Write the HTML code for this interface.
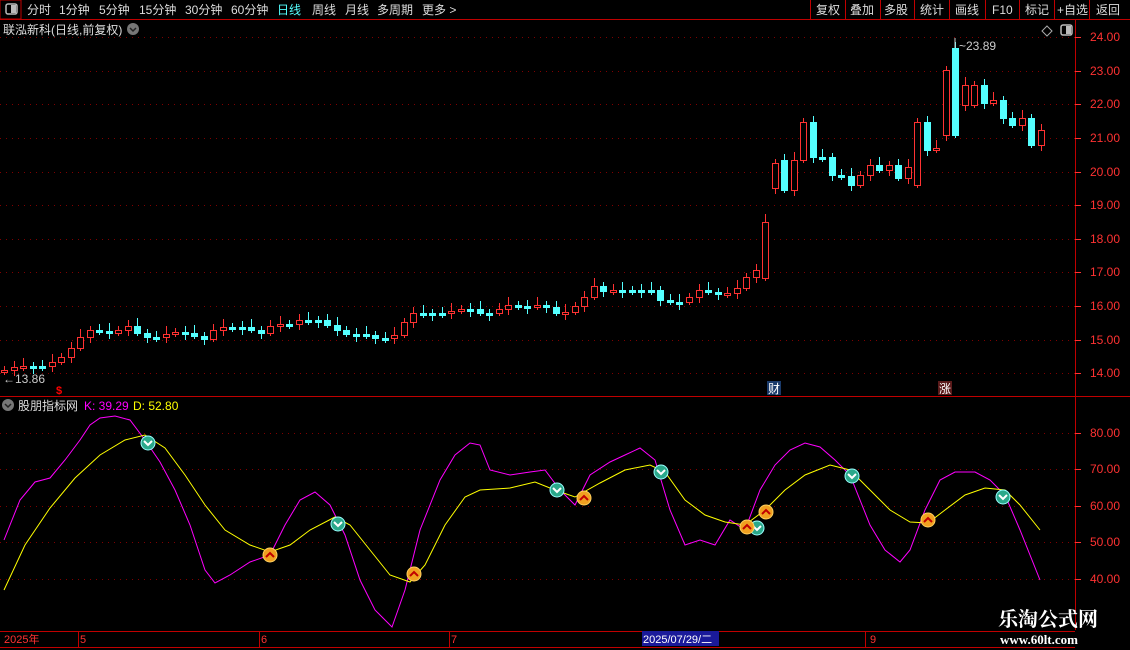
<!DOCTYPE html>
<html><head><meta charset="utf-8"><style>
body{margin:0;background:#000;width:1130px;height:650px;overflow:hidden;font-family:"Liberation Sans","Noto Sans CJK SC",sans-serif;}
svg{position:absolute;left:0;top:0}
</style></head><body>
<svg id="s" width="1130" height="650" xmlns="http://www.w3.org/2000/svg" font-family="Liberation Sans, Noto Sans CJK SC, sans-serif">
<rect width="1130" height="650" fill="#000"/>
<line x1="0" y1="19.5" x2="1130" y2="19.5" stroke="#c00000"/>
<rect x="0" y="0" width="21" height="19" fill="none" stroke="#c00000"/>
<rect x="6" y="4" width="11" height="10" rx="2" fill="none" stroke="#bbb" stroke-width="1.5"/><rect x="11" y="5" width="5" height="8" fill="#bbb"/>
<g font-size="12" fill="#ddd">
<text x="27" y="14">分时</text><text x="59" y="14">1分钟</text><text x="99" y="14">5分钟</text><text x="139" y="14">15分钟</text><text x="185" y="14">30分钟</text><text x="231" y="14">60分钟</text><text x="277" y="14" fill="#54ffff">日线</text><text x="312" y="14">周线</text><text x="345" y="14">月线</text><text x="377" y="14">多周期</text><text x="422" y="14">更多 &gt;</text>
<text x="816" y="14">复权</text><text x="850" y="14">叠加</text><text x="884" y="14">多股</text><text x="920" y="14">统计</text><text x="955" y="14">画线</text><text x="992" y="14">F10</text><text x="1025" y="14">标记</text><text x="1057" y="14">+自选</text><text x="1096" y="14">返回</text>
</g>
<g stroke="#c00000"><line x1="810.5" y1="0" x2="810.5" y2="19"/><line x1="845.5" y1="0" x2="845.5" y2="19"/><line x1="880.5" y1="0" x2="880.5" y2="19"/><line x1="914.5" y1="0" x2="914.5" y2="19"/><line x1="949.5" y1="0" x2="949.5" y2="19"/><line x1="985.5" y1="0" x2="985.5" y2="19"/><line x1="1019.5" y1="0" x2="1019.5" y2="19"/><line x1="1054.5" y1="0" x2="1054.5" y2="19"/><line x1="1089.5" y1="0" x2="1089.5" y2="19"/></g>
<text x="3" y="34" font-size="12" fill="#ddd">联泓新科(日线,前复权)</text>
<circle cx="133" cy="29" r="6" fill="#777"/><path d="M130 28l3 3 3-3" stroke="#222" fill="none" stroke-width="1.5"/>
<path d="M1047 26l5 5-5 5-5-5z" fill="none" stroke="#aaa"/>
<rect x="1061" y="25" width="11" height="10" rx="2" fill="none" stroke="#bbb" stroke-width="1.5"/><rect x="1066" y="26" width="5" height="8" fill="#bbb"/>
<line x1="1075.5" y1="20" x2="1075.5" y2="630" stroke="#c00000"/>
<line x1="0" y1="396.5" x2="1130" y2="396.5" stroke="#c00000"/>
<line x1="0" y1="631.5" x2="1075" y2="631.5" stroke="#c00000"/>
<line x1="0" y1="647.5" x2="1075" y2="647.5" stroke="#c00000"/>
<g id="grid"></g>
<g id="candles"></g>
<text x="959" y="50" font-size="12" fill="#ccc">~23.89</text>
<line x1="955" y1="38" x2="955" y2="48" stroke="#ccc"/>
<text x="3" y="383" font-size="12" fill="#ccc">←13.86</text>
<text x="56" y="394" font-size="11" fill="#f00" font-weight="bold">$</text>
<rect x="767" y="381" width="14" height="14" fill="#1a3a6a"/><text x="768" y="393" font-size="12" fill="#fff">财</text>
<rect x="938" y="381" width="14" height="14" fill="#5a1a1a"/><text x="939" y="393" font-size="12" fill="#fff">涨</text>
<circle cx="8" cy="405" r="6" fill="#777"/><path d="M5 404l3 3 3-3" stroke="#222" fill="none" stroke-width="1.5"/>
<text x="18" y="410" font-size="12" fill="#ddd">股朋指标网</text>
<text x="84" y="410" font-size="12" fill="#f0f">K: 39.29</text>
<text x="133" y="410" font-size="12" fill="#ff0">D: 52.80</text>
<polyline fill="none" stroke="#f0f" stroke-width="1" points="4,540 20,500 35,482 50,478 65,460 80,440 90,425 100,418 115,416 130,420 145,440 160,462 175,490 190,525 205,570 215,583 230,575 250,562 270,555 285,525 300,500 315,492 330,505 345,535 360,580 375,610 392,627 405,590 420,530 440,480 455,455 470,443 480,445 490,470 510,475 530,472 545,470 560,490 575,505 590,475 610,462 625,455 640,448 655,460 670,510 685,545 700,540 715,545 730,520 745,530 760,490 775,465 790,450 805,443 820,447 835,460 850,475 870,525 885,550 900,562 910,550 925,510 940,480 955,472 975,472 990,480 1005,495 1020,530 1040,580"/>
<polyline fill="none" stroke="#ff0" stroke-width="1" points="4,590 25,545 50,508 75,478 100,455 125,440 145,435 165,448 185,475 205,505 225,530 250,545 270,552 290,545 310,530 335,517 350,525 370,550 390,575 410,582 425,565 445,525 465,497 480,490 510,488 535,482 555,490 575,497 600,483 625,470 650,465 665,472 685,500 705,515 725,522 745,525 765,510 785,490 805,475 830,465 850,470 870,490 890,510 910,522 928,523 945,510 965,495 985,488 1005,490 1020,505 1040,530"/>
<g id="icons"></g>
<g font-size="12" fill="#ff3232" id="rl"></g>
<g font-size="11" fill="#ff3232">
<text x="4" y="643">2025年</text><text x="80" y="643">5</text><text x="261" y="643">6</text><text x="451" y="643">7</text><text x="870" y="643">9</text>
</g>
<g stroke="#c00000"><line x1="78.5" y1="632" x2="78.5" y2="647"/><line x1="259.5" y1="632" x2="259.5" y2="647"/><line x1="449.5" y1="632" x2="449.5" y2="647"/><line x1="865.5" y1="632" x2="865.5" y2="647"/></g>
<rect x="642" y="631" width="77" height="15" fill="#1a1a9a"/>
<text x="643" y="643" font-size="11" fill="#fff">2025/07/29/二</text>
<text x="998" y="626" font-size="20" font-weight="bold" fill="#fff" font-family="Noto Serif CJK SC, serif">乐淘公式网</text>
<text x="1000" y="644" font-size="13" font-weight="bold" fill="#fff" font-family="Liberation Serif, serif">www.60lt.com</text>
</svg>
<script>
var NS="http://www.w3.org/2000/svg";
function el(p,t,a){var e=document.createElementNS(NS,t);for(var k in a)e.setAttribute(k,a[k]);document.getElementById(p).appendChild(e);return e;}
[37,71,104,138,172,205,239,272,306,340,373].forEach(function(y){el("grid","line",{x1:0,x2:1075,y1:y+.5,y2:y+.5,stroke:"#800000","stroke-dasharray":"1 5"});});
[433,469,506,542,579].forEach(function(y){el("grid","line",{x1:0,x2:1075,y1:y+.5,y2:y+.5,stroke:"#800000","stroke-dasharray":"1 5"});});
var pl=["24.00","23.00","22.00","21.00","20.00","19.00","18.00","17.00","16.00","15.00","14.00"];
[37,71,104,138,172,205,239,272,306,340,373].forEach(function(y,i){el("rl","line",{x1:1075,x2:1081,y1:y+.5,y2:y+.5,stroke:"#ff3232"});var t=el("rl","text",{x:1090,y:y+4});t.textContent=pl[i];});
["80.00","70.00","60.00","50.00","40.00"].forEach(function(s,i){var y=[433,469,506,542,579][i];el("rl","line",{x1:1075,x2:1081,y1:y+.5,y2:y+.5,stroke:"#ff3232"});var t=el("rl","text",{x:1090,y:y+4});t.textContent=s;});
var ys=[370,367,366,366,366,362,357,348,337,330,331,333,330,326,333,337,337,334,332,333,336,339,330,327,327,327,330,333,326,324,324,320,320,320,325,330,334,334,335,338,338,335,322,313,313,313,313,311,309,309,313,313,309,305,306,306,305,307,313,312,306,297,286,291,290,290,290,290,290,300,302,302,297,290,292,294,293,288,277,270,222,165,190,160,122,157,157,175,176,185,175,165,170,165,178,167,122,150,148,120,48,105,85,103,100,118,125,118,145,130];
var ov={81:[188,163],82:[160,190],84:[160,122],85:[122,157],99:[135,70],100:[48,135],101:[105,85]};
var sp=(1041-4)/(ys.length-1);
for(var i=0;i<ys.length;i++){var x=4+i*sp,y=ys[i],o=i?ys[i-1]:y+2;
 if(i==80){o=278;} if(i==96){o=185;}
 if(ov[i]){o=ov[i][0];y=ov[i][1];}
 var up=y<o, t=Math.min(y,o),b=Math.max(y,o); if(b-t<2){b=t+2;}
 var c=up?"#ff3232":"#54ffff";
 el("candles","line",{x1:Math.round(x)+.5,x2:Math.round(x)+.5,y1:t-4-(i%3)*2,y2:b+3+(i%2)*3,stroke:c});
 el("candles","rect",{x:Math.round(x)-3+.5,y:t+.5,width:6,height:b-t,fill:up?"#000":c,stroke:c});}
function ic(x,y,dn){
 el("icons","circle",{cx:x,cy:y,r:7,fill:dn?"#2aa88a":"#f0a020",stroke:dn?"#9ff":"#ffd060","stroke-width":1});
 el("icons","path",{d:dn?"M"+(x-4)+" "+(y-2)+"l4 4 4-4":"M"+(x-4)+" "+(y+2)+"l4-4 4 4",stroke:dn?"#fff":"#c00000","stroke-width":2,fill:"none"});}
[[148,443],[338,524],[557,490],[661,472],[757,528],[852,476],[1003,497]].forEach(function(p){ic(p[0],p[1],1);});
[[270,555],[414,574],[584,498],[747,527],[766,512],[928,520]].forEach(function(p){ic(p[0],p[1],0);});
</script>
</body></html>
